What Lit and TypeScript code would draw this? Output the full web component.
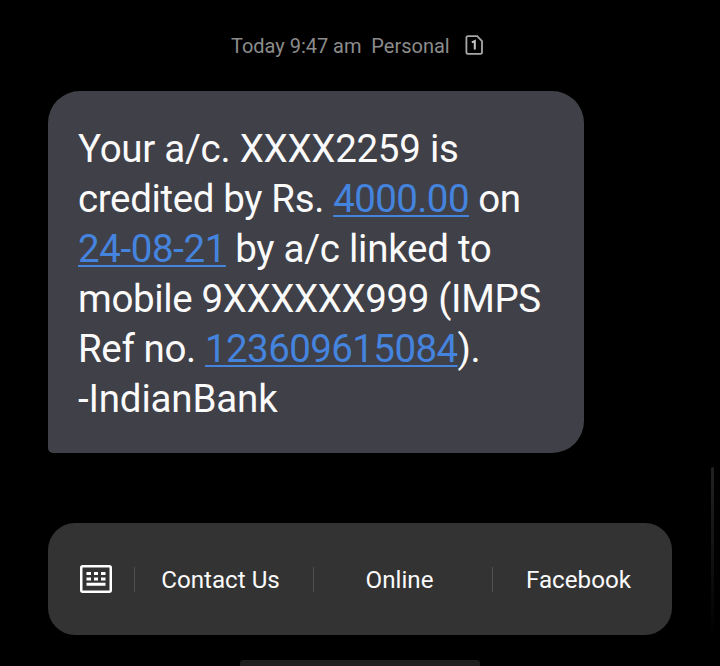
import { LitElement, html, css } from "lit";
import { customElement } from "lit/decorators.js";

@customElement("app-root")
export class AppRoot extends LitElement {
  static styles = css`
    :host {
      display: block;
      position: relative;
      box-sizing: border-box;
      width: 720px;
      height: 666px;
      overflow: hidden;
      background: #000;
      color: #fafafa;
      font-family: Roboto, "Liberation Sans", sans-serif;
    }
    .screen {
      display: flex;
      flex-direction: column;
      height: 100%;
    }
    .screen > * {
      flex: none;
    }
    .meta {
      display: flex;
      align-items: center;
      height: 91px;
      padding-left: 231px;
      color: #8c8c8c;
      font-size: 20px;
      letter-spacing: -0.02px;
      line-height: 24px;
      box-sizing: border-box;
      white-space: pre;
    }
    .meta span {
      padding-top: 1px;
    }
    .sim {
      display: block;
      margin-left: 15px;
      margin-bottom: 1px;
    }
    .bubble {
      box-sizing: border-box;
      width: 536px;
      height: 362px;
      margin-left: 48px;
      padding: 33px 30px 0;
      border-radius: 32px 32px 32px 5px;
      background: #404048;
      font-size: 38.5px;
      letter-spacing: -0.27px;
      line-height: 50px;
      white-space: pre;
    }
    .tight {
      letter-spacing: -0.37px;
    }
    .loose {
      letter-spacing: -0.17px;
    }
    .link {
      color: #4584de;
      letter-spacing: -0.6px;
      text-decoration: underline;
      text-decoration-thickness: 2px;
      text-underline-offset: 3px;
      text-decoration-skip-ink: none;
    }
    .date {
      letter-spacing: -0.4px;
    }
    .bar {
      display: flex;
      align-items: center;
      box-sizing: border-box;
      width: 624px;
      height: 112px;
      margin: 70px 0 25px 48px;
      border-radius: 27px;
      background: #333;
    }
    .keys {
      display: flex;
      justify-content: center;
      padding-left: 32px;
      width: 54px;
    }
    .keys svg {
      display: block;
      margin-right: 22px;
    }
    .action {
      box-sizing: border-box;
      width: 179px;
      height: 25px;
      border-left: 1px solid #505050;
      font-size: 24.2px;
      line-height: 27px;
      text-align: center;
      padding-right: 7px;
      white-space: nowrap;
    }
    .handle {
      width: 240px;
      height: 10px;
      margin-left: 240px;
      border-radius: 3px;
      background: #1e1e1e;
    }
    .scroll {
      position: absolute;
      left: 711px;
      top: 467px;
      width: 3px;
      height: 170px;
      border-radius: 2px;
      background: linear-gradient(#222, #141414 45%, #000);
    }
  `;

  render() {
    return html`
      <div class="screen">
        <div class="meta"><span>Today 9:47 am  Personal</span><svg class="sim" width="19" height="20" viewBox="0 0 19 20" fill="none">
            <path d="M3 1.2H12.2L17 6V17.2Q17 18.8 15.4 18.8H3Q1.4 18.8 1.4 17.2V2.8Q1.4 1.2 3 1.2Z" stroke="#a8a8a8" stroke-width="1.8" />
            <path d="M6.8 7.3L9.8 6V14.5" stroke="#c4c4c4" stroke-width="2" />
          </svg></div>
        <div class="bubble"><div>Your a/c. XXXX2259 is</div><div class="tight">credited by Rs. <span class="link">4000.00</span> on</div><div><span class="link date">24-08-21</span> by a/c linked to</div><div class="tight">mobile 9XXXXXX999 (IMPS</div><div class="tight">Ref no. <span class="link">123609615084</span>).</div><div class="loose">-IndianBank</div></div>
        <div class="bar">
          <div class="keys">
            <svg width="32" height="28" viewBox="0 0 32 28" fill="none">
              <rect x="1.25" y="1.25" width="29.5" height="25.5" rx="1.5" stroke="#fff" stroke-width="2.5" />
              <path d="M6.5 8.5h4.5M14 8.5h4M21 8.5h4.5M6.5 14h4.5M14 14h4M21 14h4.5M6.5 19.3h19" stroke="#fff" stroke-width="3" />
            </svg>
          </div>
          <div class="action">Contact Us</div>
          <div class="action">Online</div>
          <div class="action">Facebook</div>
        </div>
        <div class="handle"></div>
      </div>
      <div class="scroll"></div>
    `;
  }
}
